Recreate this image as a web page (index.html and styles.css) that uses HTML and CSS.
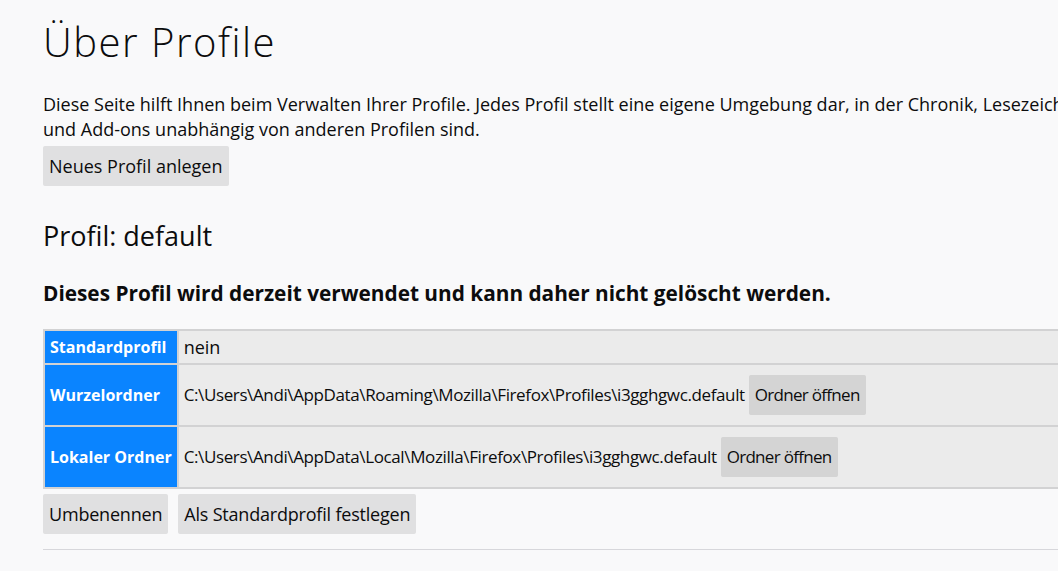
FILE: index.html
```html
<!DOCTYPE html>
<html lang="de">
<head>
<meta charset="utf-8">
<title>Über Profile</title>
<link rel="stylesheet" href="styles.css">
</head>
<body>
<main class="page">
  <h1 class="title">Über Profile</h1>
  <p class="intro">Diese Seite hilft Ihnen beim Verwalten Ihrer Profile. Jedes Profil stellt eine eigene Umgebung dar, in der Chronik, Lesezeichen, Einstellungen und Add-ons unabhängig von anderen Profilen sind.</p>
  <button class="btn">Neues Profil anlegen</button>

  <section class="profile">
    <h2 class="profile-name">Profil: default</h2>
    <h3 class="profile-note">Dieses Profil wird derzeit verwendet und kann daher nicht gelöscht werden.</h3>
    <table class="info">
      <tr>
        <th>Standardprofil</th>
        <td>nein</td>
      </tr>
      <tr>
        <th>Wurzelordner</th>
        <td class="tall"><span class="path">C:\Users\Andi\AppData\Roaming\Mozilla\Firefox\Profiles\i3gghgwc.default</span><button class="btn btn-cell">Ordner öffnen</button></td>
      </tr>
      <tr>
        <th>Lokaler Ordner</th>
        <td class="tall"><span class="path">C:\Users\Andi\AppData\Local\Mozilla\Firefox\Profiles\i3gghgwc.default</span><button class="btn btn-cell">Ordner öffnen</button></td>
      </tr>
    </table>
    <div class="actions">
      <button class="btn">Umbenennen</button>
      <button class="btn">Als Standardprofil festlegen</button>
    </div>
    <hr class="sep">
  </section>
</main>
</body>
</html>
```

FILE: styles.css
```css
html {
  overflow: hidden;
  background: #f9f9fa;
}

body {
  margin: 0;
  color: #0c0c0d;
  font-family: "Open Sans", "Noto Sans", sans-serif;
  font-size: 18px;
}

.page {
  width: 1180px;
  padding: 0 43px;
}

.title {
  margin: 18px 0 0;
  font-size: 40px;
  font-weight: 300;
  letter-spacing: 1.5px;
  line-height: 48px;
}

.intro {
  margin: 26px 0 0;
  line-height: 25px;
}

.btn {
  display: inline-flex;
  align-items: center;
  height: 40px;
  margin: 0;
  padding: 0 6px;
  border: none;
  border-radius: 2px;
  background: rgba(12, 12, 13, 0.1);
  color: #0c0c0d;
  font: inherit;
  line-height: 24px;
}

.intro + .btn {
  margin-top: 4px;
}

.profile-name {
  margin: 32px 0 0;
  font-size: 27px;
  font-weight: 400;
  line-height: 36px;
}

.profile-note {
  margin: 27px 0 0;
  font-size: 20.8px;
  font-weight: 700;
  line-height: 25px;
}

.info {
  width: 100%;
  margin-top: 23px;
  border-collapse: separate;
  border-spacing: 2px;
  background: #d2d2d3;
}

.info th,
.info td {
  padding: 5px;
  line-height: 22px;
  text-align: left;
  white-space: nowrap;
}

.info th {
  width: 121px;
  background: #0a84ff;
  color: #fff;
  font-size: 16px;
  font-weight: 700;
}

.info td {
  width: 100%;
  background: #ebebeb;
}

.info td.tall {
  height: 60px;
  padding-top: 0;
  padding-bottom: 0;
}

.path {
  font-size: 17px;
  letter-spacing: -0.38px;
  vertical-align: middle;
}

.btn-cell {
  margin-left: 4px;
  font-size: 17px;
  letter-spacing: -0.7px;
  vertical-align: middle;
}

.actions {
  display: flex;
  gap: 10px;
  margin-top: 5px;
}

.actions .btn {
  letter-spacing: -0.2px;
}

.sep {
  margin: 15px 0 0;
  border: none;
  border-top: 1px solid #d7d7db;
}
```
